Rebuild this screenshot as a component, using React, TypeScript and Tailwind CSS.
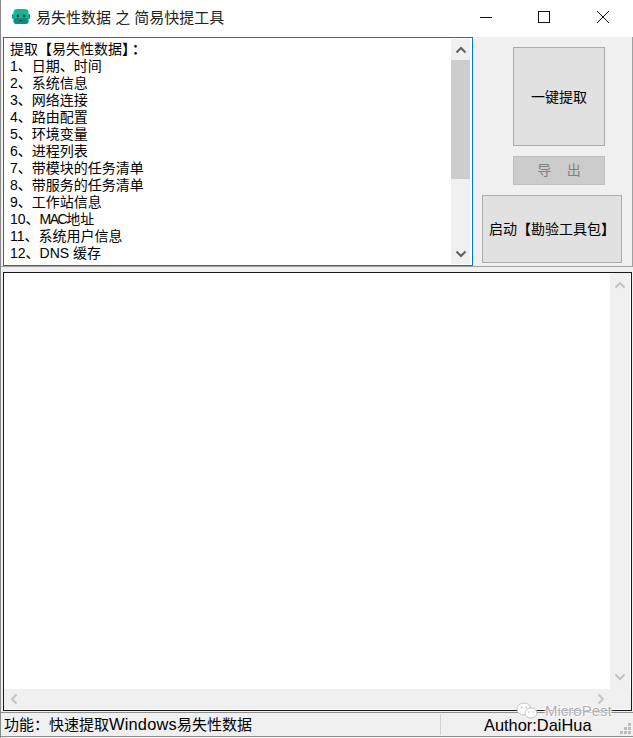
import React from "react";

const font = { fontFamily: '"Liberation Sans", "Noto Sans CJK SC", sans-serif' };

const lines: React.ReactNode[] = [
  <>提取<span className="font-bold">【</span>易失性数据<span className="font-bold">】</span><span className="ml-[3px] font-bold">：</span></>,
  "1、日期、时间",
  "2、系统信息",
  "3、网络连接",
  "4、路由配置",
  "5、环境变量",
  "6、进程列表",
  "7、带模块的任务清单",
  "8、带服务的任务清单",
  "9、工作站信息",
  <>10、<span className="tracking-[-1.5px]">MAC</span>地址</>,
  "11、系统用户信息",
  "12、DNS 缓存",
];

function Chevron({ d, color, className }: { d: string; color: string; className?: string }) {
  return (
    <svg width="12" height="12" viewBox="0 0 12 12" className={className}>
      <path d={d} fill="none" stroke={color} strokeWidth="2" />
    </svg>
  );
}

const UP = "M1.5 8.5 L6 4 L10.5 8.5";
const DOWN = "M1.5 3.5 L6 8 L10.5 3.5";
const LEFT = "M8.5 1.5 L4 6 L8.5 10.5";
const RIGHT = "M3.5 1.5 L8 6 L3.5 10.5";

export default function App() {
  return (
    <div className="relative w-[633px] h-[738px] overflow-hidden border-l border-[#8a8a8a] bg-[#f0f0f0] text-black" style={font}>
      {/* title bar */}
      <div className="flex h-[37px] bg-white">
        <svg width="18" height="18" viewBox="0 0 18 18" className="ml-[11px] mt-[8px]">
          <rect x="0" y="6" width="18" height="5" rx="1" fill="#0e9c85" />
          <rect x="1.5" y="1" width="15" height="15" rx="3.5" fill="#16b596" />
          <rect x="1.5" y="10" width="15" height="6" rx="3" fill="#0c8f7a" />
          <circle cx="6" cy="8" r="1.4" fill="#0b3d3a" />
          <circle cx="12" cy="8" r="1.4" fill="#0b3d3a" />
          <path d="M7.5 13 Q9 11.5 10.5 13" stroke="#0b3d3a" fill="none" />
        </svg>
        <span className="ml-[6px] text-[15px] leading-[35px] text-[#222] whitespace-nowrap">易失性数据 之 简易快提工具</span>
        <div className="ml-auto flex items-start">
          <svg width="45" height="34" viewBox="0 0 45 34" className="mr-[14px]">
            <path d="M10 17.5 H22" stroke="#111" fill="none" />
          </svg>
          <svg width="45" height="34" viewBox="0 0 45 34" className="mr-[14px]">
            <rect x="9.5" y="11.5" width="11" height="11" stroke="#111" fill="none" />
          </svg>
          <svg width="30" height="34" viewBox="0 0 30 34" className="mr-[15px]">
            <path d="M9 11 L21 23 M21 11 L9 23" stroke="#111" fill="none" />
          </svg>
        </div>
      </div>

      {/* top panel */}
      <div className="flex h-[230px] border-r border-b border-[#a0a0a0]">
        <div className="ml-[2px] flex h-[229px] w-[470px] border border-[#0078d7] bg-white">
          <div className="flex-1 pl-[6px] pt-[3px] text-[14px] leading-[17px] whitespace-nowrap">
            {lines.map((l, i) => (
              <div key={i}>{l}</div>
            ))}
          </div>
          <div className="my-[1px] mr-[2px] flex w-[19px] flex-col bg-[#f0f0f0]">
            <div className="flex h-[21px] items-center justify-center">
              <Chevron d={UP} color="#606060" />
            </div>
            <div className="h-[119px] bg-[#cdcdcd]" />
            <div className="flex-1" />
            <div className="flex h-[21px] items-center justify-center">
              <Chevron d={DOWN} color="#606060" />
            </div>
          </div>
        </div>
        <div className="flex flex-1 flex-col items-start pt-[10px] text-[14px]">
          <button className="ml-[40px] h-[99px] w-[92px] border border-[#adadad] bg-[#e1e1e1] pt-[2px] text-[14px]">一键提取</button>
          <button className="ml-[40px] mt-[10px] h-[29px] w-[92px] border border-[#bfbfbf] bg-[#cccccc] text-[14px] text-[#838383]">
            导&nbsp;&nbsp;&nbsp;&nbsp;出
          </button>
          <button className="ml-[9px] mt-[10px] h-[68px] w-[140px] border border-[#adadad] bg-[#e1e1e1] text-[14px] whitespace-nowrap">
            启动<span className="font-bold">【</span>勘验工具包<span className="font-bold">】</span>
          </button>
        </div>
      </div>

      {/* output */}
      <div className="ml-[2px] mt-[5px] flex h-[439px] w-[629px] flex-col border border-[#1a1a1a] bg-white">
        <div className="flex flex-1 min-h-0">
          <div className="flex-1" />
          <div className="mr-[1px] flex w-[20px] flex-col items-center justify-between bg-[#f0f0f0] py-[6px]">
            <Chevron d={UP} color="#c4c4c4" />
            <Chevron d={DOWN} color="#c4c4c4" />
          </div>
        </div>
        <div className="mb-[1px] flex h-[20px] items-center justify-between bg-[#f0f0f0] pl-[4px] pr-[24px]">
          <Chevron d={LEFT} color="#c4c4c4" />
          <Chevron d={RIGHT} color="#c4c4c4" />
        </div>
      </div>

      {/* status bar */}
      <div className="mt-[1px] flex h-[25px] border-t border-b border-[#8f8f8f] text-[15px] leading-[22px]">
        <div className="w-[439px] pl-[3px] whitespace-nowrap">
          功能：快速提取<span className="text-[16.4px] tracking-[0.2px]">Windows</span>易失性数据
        </div>
        <div className="my-[1px] w-px bg-[#d0d0d0]" />
        <div className="pl-[43px] text-[16.4px] leading-[24px] whitespace-nowrap">Author:DaiHua</div>
      </div>

      {/* size grip */}
      <svg width="14" height="14" viewBox="0 0 14 14" className="absolute right-0 bottom-[2px]">
        <path d="M9 1h3v3H9zM5 5h3v3H5zM9 5h3v3H9zM1 9h3v3H1zM5 9h3v3H5zM9 9h3v3H9z" fill="#bdbdbd" />
      </svg>

      {/* watermark */}
      <div className="absolute left-[515px] top-[702px] flex items-center gap-[7px] text-[15px] leading-[18px] text-[#b0b0b0] [text-shadow:0_0_1px_#fff,0_0_2px_#fff,1px_1px_2px_#fff,-1px_-1px_2px_#fff]">
        <svg width="22" height="18" viewBox="0 0 22 18">
          <ellipse cx="8" cy="7" rx="7" ry="6" fill="#fff" stroke="#c4c4c4" />
          <ellipse cx="15" cy="11" rx="6" ry="5" fill="#fff" stroke="#c4c4c4" />
          <circle cx="5.5" cy="5.5" r="1" fill="#c4c4c4" />
          <circle cx="10" cy="5.5" r="1" fill="#c4c4c4" />
          <circle cx="13" cy="10" r="0.8" fill="#c4c4c4" />
          <circle cx="17" cy="10" r="0.8" fill="#c4c4c4" />
        </svg>
        <span>MicroPest</span>
      </div>
    </div>
  );
}
